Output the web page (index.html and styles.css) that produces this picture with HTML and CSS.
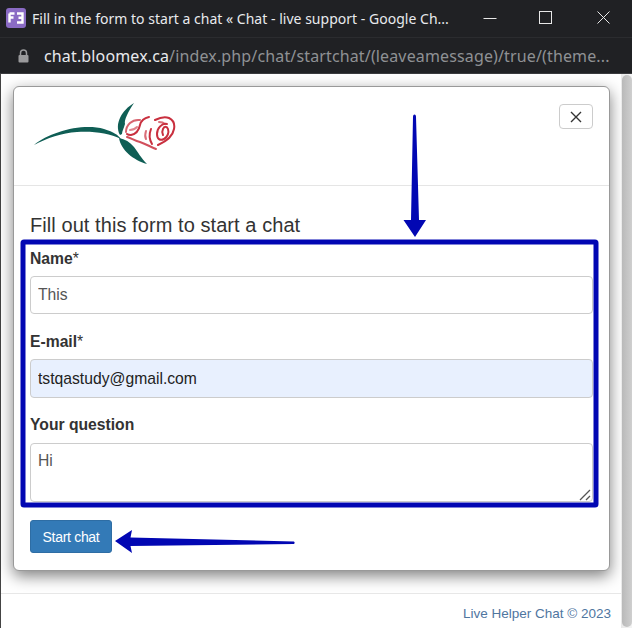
FILE: index.html
```html
<!DOCTYPE html>
<html lang="en">
<head>
<meta charset="utf-8">
<title>Fill in the form to start a chat</title>
<link rel="stylesheet" href="styles.css">
</head>
<body>
<div class="window">
  <header class="chrome">
    <div class="titlebar">
      <svg class="favicon" width="20" height="20" viewBox="0 0 20 20"><rect width="20" height="20" rx="3" fill="#8a6bc4"/><path d="M3.500 5.500h5M3.500 5.500v9M3.500 9.500h4M11 5.500h5.500v9H11M12.500 9.800h4" fill="none" stroke="#fff" stroke-width="2.400"/></svg>
      <span class="win-title">Fill in the form to start a chat « Chat - live support - Google Ch...</span>
      <div class="win-controls">
        <svg width="14" height="14" viewBox="0 0 14 14"><path d="M0.500 7.500h13" stroke="#e8e8e8"/></svg>
        <svg width="14" height="14" viewBox="0 0 14 14"><rect x="0.500" y="0.500" width="12" height="12" fill="none" stroke="#e8e8e8"/></svg>
        <svg class="win-close" width="14" height="14" viewBox="0 0 14 14"><path d="M0.500 0.500l12 12M12.500 0.500l-12 12" stroke="#e8e8e8"/></svg>
      </div>
    </div>
    <div class="urlbar">
      <svg class="lock" width="11" height="14" viewBox="0 0 11 14"><path d="M2.500 6V4a3 3 0 0 1 6 0v2" fill="none" stroke="#9a9a9c" stroke-width="1.500"/><rect x="0.500" y="6" width="10" height="7.500" rx="1" fill="#9a9a9c"/></svg>
      <span class="url"><span class="host">chat.bloomex.ca</span>/index.php/chat/startchat/(leaveamessage)/true/(theme...</span>
    </div>
  </header>
  <div class="viewport">
    <main class="page">
      <section class="modal">
        <div class="modal-head">
          <svg class="logo" width="144" height="66" viewBox="0 0 144 66">
            <path d="M2 43C18 30 50 21 72 27c10 3 14 6 17 10-12-6-28-8-44-7C30 31 15 36 2 43z" fill="#0f5e55"/>
            <path d="M88 33C82 22 90 8 102 1 96 10 92 18 93 22c-1 4-3 7-3 10z" fill="#0f5e55"/>
            <path d="M87 36c2 12 14 22 28 26-6-6-9-12-13-17-4-5-9-8-15-9z" fill="#0f5e55"/>
            <g fill="none" stroke="#c9303f" stroke-linecap="round" stroke-width="2">
              <path d="M94 30c0-7 6-13 14-12" opacity=".75"/>
              <path d="M117 15c-5 1-8 4-9 8-1 5-4 9-9 10-2 0-3 0-4-1"/>
              <path d="M95 35c4 1 8 4 13 5 6 2 11 5 16 7" opacity=".85"/>
              <path d="M98 28c3 0 5-1 7-3" opacity=".6"/>
              <path d="M123 18c4-2 9-4 14-2 4 2 6 6 5 11-1 6-7 12-16 16"/>
              <path d="M135 22c-5-1-10 4-10 10 0 5 3 7 7 5 4-2 5-7 4-10-1-3-4-3-5 0-1 2-1 4 0 6"/>
              <path d="M119 27c-2 5-2 10 1 15"/>
              <path d="M114 29c-1 3-1 6 0 8" opacity=".7"/>
              <path d="M127 20c3 0 5 1 6 2" opacity=".7"/>
            </g>
          </svg>
          <button class="close" type="button" aria-label="Close">
            <svg width="12" height="12" viewBox="0 0 12 12"><path d="M1 1l10 10M11 1L1 11" stroke="#333" stroke-width="1.400"/></svg>
          </button>
        </div>
        <div class="modal-body">
          <h1 class="form-title">Fill out this form to start a chat</h1>
          <form class="form">
            <div class="field">
              <label class="label" for="name"><b>Name</b>*</label>
              <input class="control" id="name" type="text" value="This">
            </div>
            <div class="field">
              <label class="label" for="email"><b>E-mail</b>*</label>
              <input class="control filled" id="email" type="text" value="tstqastudy@gmail.com">
            </div>
            <div class="field field-last">
              <label class="label" for="question"><b>Your question</b></label>
              <textarea class="control area" id="question">Hi</textarea>
            </div>
            <button class="submit" type="button">Start chat</button>
          </form>
        </div>
      </section>
      <footer class="footer"><a class="credit" href="#">Live Helper Chat © 2023</a></footer>
    </main>
    <div class="scrollbar"><div class="thumb"></div></div>
  </div>
  <svg class="markup" width="632" height="628" viewBox="0 0 632 628">
    <path d="M580 500l10-10M586 500l4-4" stroke="#555" stroke-width="1.300"/>
    <rect x="23" y="242" width="573" height="263" rx="1" fill="none" stroke="#0207b3" stroke-width="5"/>
    <path d="M414.500 114.500c1 0 1.500 1 1.500 2.500l3 103h7l-11 17-11.500-17h7.500l2-103c0-1.500.5-2.500 1.500-2.500z" fill="#0207b3"/>
    <path d="M115 541l17-11-1.500 7.500 163 4c1.500 0 1.500 2.500 0 2.500l-163 2 1.500 7z" fill="#0207b3"/>
  </svg>
</div>
</body>
</html>
```
FILE: styles.css
```css
* { box-sizing: border-box; }
html, body { margin: 0; height: 100%; overflow: hidden; }
body { background: #fff; font-family: "Liberation Sans", Arial, sans-serif; color: #333; }
.window { position: relative; width: 632px; height: 628px; display: flex; flex-direction: column; }
.chrome { background: #202124; height: 74px; flex: none; border-bottom: 1px solid #3a3b3e; }
.titlebar { height: 38px; display: flex; align-items: center; padding-left: 6px; border-bottom: 1px solid #2b2c2f; }
.favicon { flex: none; margin-top: -2px; }
.win-title { margin-left: 6px; font-size: 14px; color: #e8eaed; white-space: nowrap; flex: 1; font-family: "Noto Sans", sans-serif; letter-spacing: 0.02px; }
.win-controls { display: flex; gap: 42px; padding-right: 21px; align-items: center; margin-top: -1px; }
.win-close { margin-left: 2px; }
.urlbar { height: 35px; display: flex; align-items: center; padding-left: 18px; background: #202124; }
.lock { flex: none; margin-top: 1px; }
.url { margin-left: 15px; font-family: "Noto Sans", sans-serif; font-size: 16px; color: #8f9194; white-space: nowrap; letter-spacing: 0.14px; }
.host { color: #e8eaed; }
.viewport { flex: 1; display: flex; min-height: 0; }
.page { flex: 1; display: flex; flex-direction: column; padding-top: 12px; min-width: 0; border-left: 1px solid #444; }
.modal { width: 597px; height: 485px; margin-left: 12px; background: #fff; border: 1px solid #999; border-radius: 6px; box-shadow: 0 5px 15px rgba(0,0,0,.5); flex: none; }
.modal-head { height: 99px; border-bottom: 1px solid #e5e5e5; display: flex; justify-content: space-between; align-items: flex-start; padding: 15px 16px 0 18px; }
.logo { flex: none; }
.close { width: 34px; height: 25px; margin-top: 2px; padding: 0; background: #fff; border: 1px solid #ccc; border-radius: 4px; display: flex; align-items: center; justify-content: center; }
.modal-body { padding: 28px 16px 0 16px; }
.form-title { margin: 0; font-size: 20px; line-height: 22px; font-weight: 400; color: #333; letter-spacing: 0.07px; }
.form { display: flex; flex-direction: column; margin-top: 14px; }
.field { display: flex; flex-direction: column; margin-bottom: 19px; }
.label { font-size: 15.7px; line-height: 18px; margin-bottom: 8px; color: #333; }
.label b { font-weight: 700; }
.field-last .label { margin-top: -1px; margin-bottom: 9px; }
.control { display: block; width: 563px; height: 38px; padding: 6px 7px; border: 1px solid #ccc; border-radius: 4px; background: #fff; font: 15.7px/22px "Liberation Sans", Arial, sans-serif; color: #555; outline: none; }
.filled { background: #e8f0fe; color: #222; height: 39px; }
.area { height: 59px; margin-bottom: -1px; padding-top: 6px; resize: none; }
.submit { align-self: flex-start; width: 82px; height: 33px; margin-top: 0; padding: 0; background: #337ab7; border: 1px solid #2e6da4; border-radius: 3px; color: #fff; font: 14px "Liberation Sans", Arial, sans-serif; letter-spacing: -0.3px; }
.footer { margin-top: 22px; border-top: 1px solid #e7e7e7; padding: 12px 10px 0 0; text-align: right; font-size: 13.5px; }
.credit { color: #4f769f; text-decoration: none; }
.scrollbar { width: 11px; flex: none; background: linear-gradient(90deg, #e9e9e9, #f4f4f4); padding-top: 1px; }
.thumb { width: 10px; height: 552px; margin-left: 1px; background: linear-gradient(90deg, #b9b9b9, #cfcfcf); border-radius: 5px; }
.markup { position: absolute; left: 0; top: 0; pointer-events: none; }
```
